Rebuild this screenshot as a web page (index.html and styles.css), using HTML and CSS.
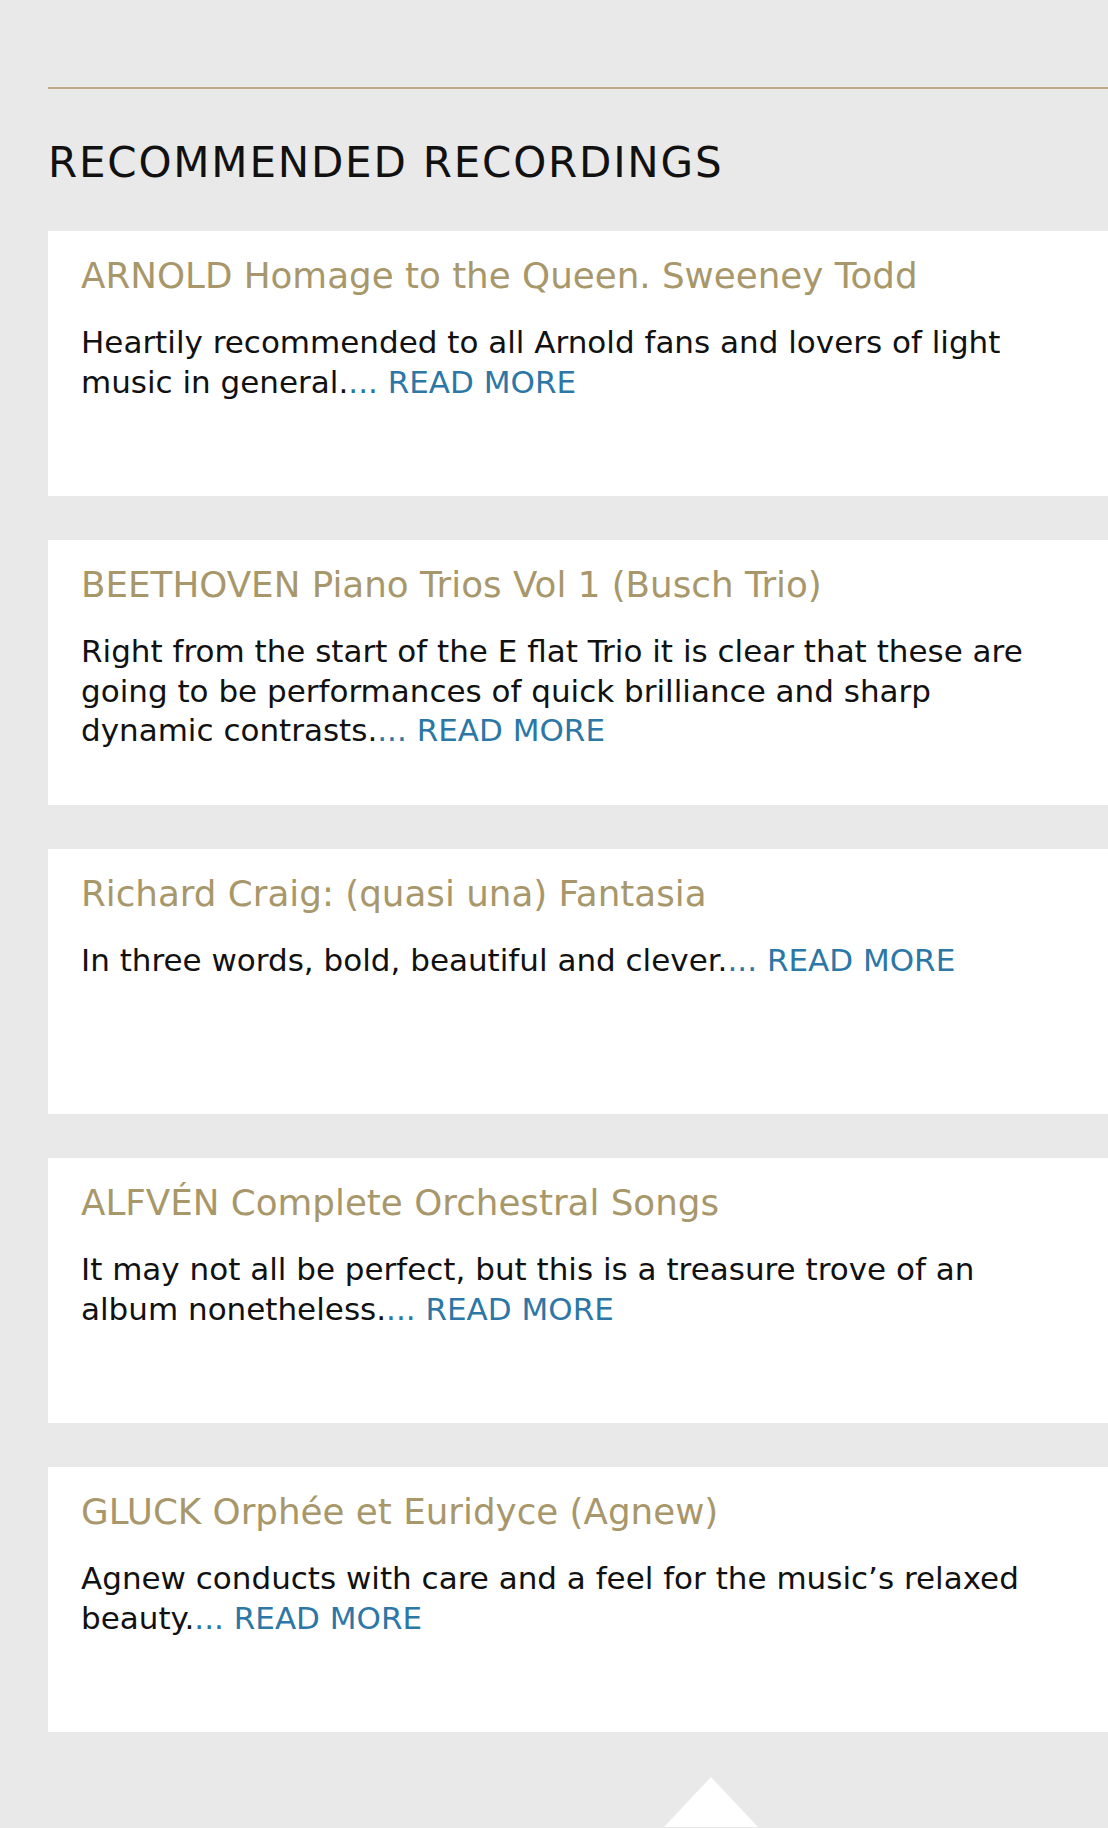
FILE: index.html
```html
<!DOCTYPE html>
<html lang="en">
    <head>
        <meta charset="UTF-8" />
        <meta name="viewport" content="width=device-width, initial-scale=1.0" />
        <title>Recommended Recordings</title>
        <link rel="stylesheet" href="styles.css">
    </head>
    <body>
        <div class="recs">
            <hr class="recs-rule" />
            <h2 class="recs-title">RECOMMENDED RECORDINGS</h2>

            <div class="rec-card">
                <h3>ARNOLD Homage to the Queen. Sweeney Todd</h3>
                <p>Heartily recommended to all Arnold fans and lovers of light music in general.<a href="#">... READ MORE</a></p>
            </div>
            <div class="rec-card">
                <h3>BEETHOVEN Piano Trios Vol 1 (Busch Trio)</h3>
                <p>Right from the start of the E flat Trio it is clear that these are going to be performances of quick brilliance and sharp dynamic contrasts.<a href="#">... READ MORE</a></p>
            </div>
            <div class="rec-card">
                <h3>Richard Craig: (quasi una) Fantasia</h3>
                <p>In three words, bold, beautiful and clever.<a href="#">... READ MORE</a></p>
            </div>
            <div class="rec-card">
                <h3>ALFVÉN Complete Orchestral Songs</h3>
                <p>It may not all be perfect, but this is a treasure trove of an album nonetheless.<a href="#">... READ MORE</a></p>
            </div>
            <div class="rec-card">
                <h3>GLUCK Orphée et Euridyce (Agnew)</h3>
                <p>Agnew conducts with care and a feel for the music’s relaxed beauty.<a href="#">... READ MORE</a></p>
            </div>
        </div>

        <div class="recs-foot">
            <span class="recs-arrow"></span>
        </div>
    </body>
</html>
```

FILE: styles.css
```css
* {
    box-sizing: border-box;
}

html,
body {
    height: 100%;
}

body {
    margin: 0;
    overflow: hidden;
    background-color: #e9e9e9;
    font-family: "DejaVu Sans", Verdana, sans-serif;
}

.recs {
    padding: 87px 0 0 48px;
}

.recs-rule {
    height: 2px;
    margin: 0;
    border: 0;
    background-color: #bea884;
}

.recs-title {
    margin: 49px 0 44px;
    color: #111;
    font-size: 42px;
    font-weight: normal;
    line-height: 49px;
    letter-spacing: 1.8px;
}

.rec-card {
    height: 265px;
    margin-bottom: 44px;
    padding: 24px 58px 24px 33px;
    background-color: #fff;
}

.rec-card h3 {
    margin: 0 0 26px;
    color: #a8976a;
    font-size: 35.7px;
    font-weight: normal;
    line-height: 42px;
}

.rec-card p {
    margin: 0;
    color: #111;
    font-size: 31px;
    line-height: 39.5px;
}

.rec-card a {
    color: #2c77a6;
    text-decoration: none;
}

.recs-foot {
    padding: 1px 0 0 664px;
}

.recs-arrow {
    display: block;
    width: 0;
    border-right: 47px solid transparent;
    border-bottom: 50px solid #fff;
    border-left: 47px solid transparent;
}
```
